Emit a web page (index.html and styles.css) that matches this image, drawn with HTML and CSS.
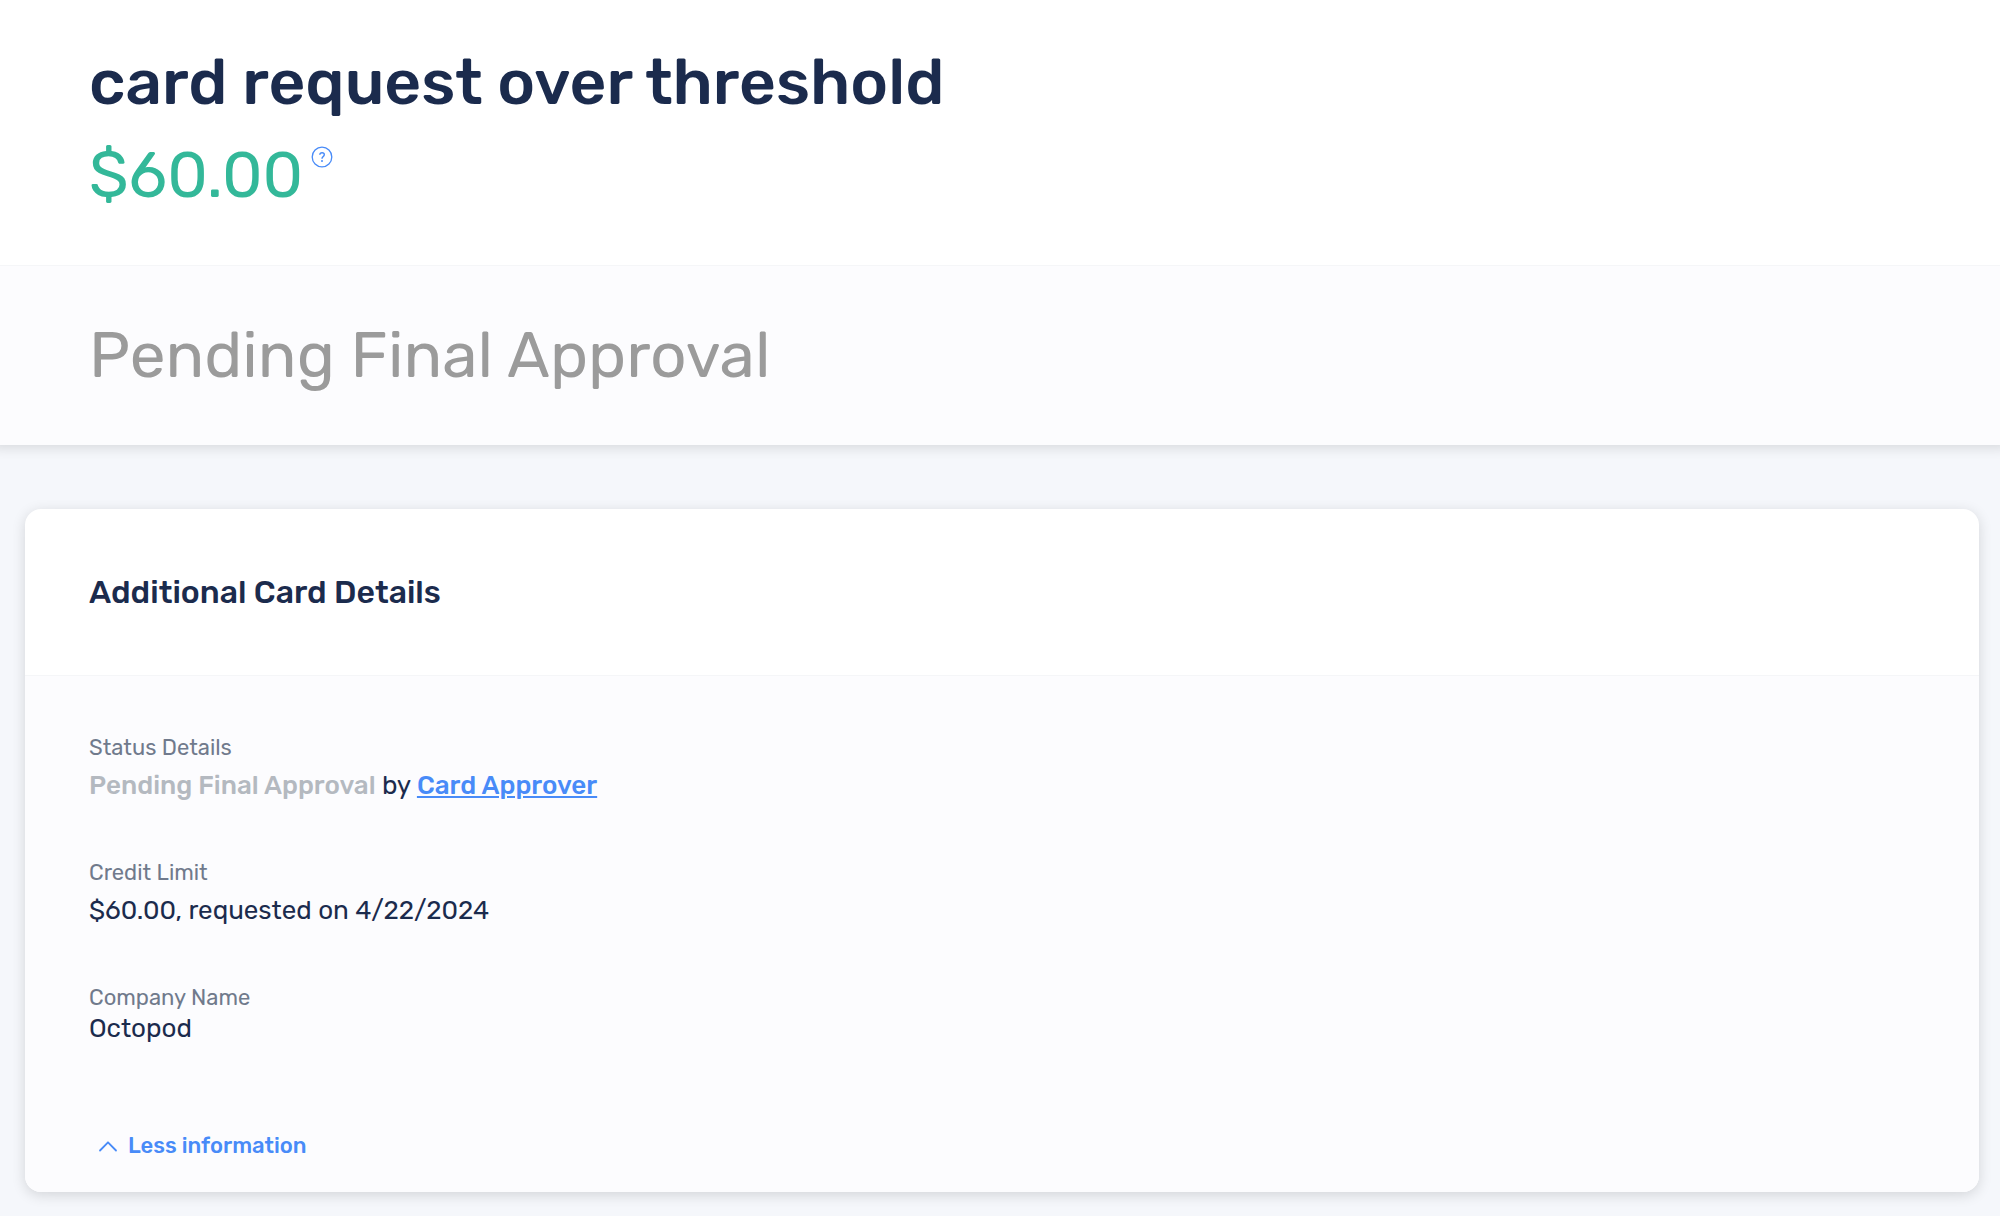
FILE: index.html
```html
<!DOCTYPE html>
<html lang="en">
<head>
<meta charset="utf-8">
<meta name="viewport" content="width=device-width, initial-scale=1">
<title>Card request over threshold</title>
<link rel="stylesheet" href="styles.css">
</head>
<body>
<header class="request">
  <div class="request-summary">
    <h1 class="request-title">card request over threshold</h1>
    <div class="request-amount">
      <span>$60.00</span>
      <button class="help" type="button" aria-label="About this amount">
        <svg class="help-ring" viewBox="0 0 22 22" aria-hidden="true"><circle cx="11" cy="11" r="9.8" fill="none" stroke="currentColor" stroke-width="1.3"/><path d="M8.8 8.7c.1-1.3 1-2 2.3-2 1.3 0 2.2.8 2.2 1.9 0 1-.5 1.5-1.2 2-.8.6-1.1 1-1.1 2.1" fill="none" stroke="currentColor" stroke-width="1.4"/><circle cx="11" cy="15" r="1" fill="currentColor"/></svg>
      </button>
    </div>
  </div>
  <p class="request-status">Pending Final Approval</p>
</header>
<main class="content">
  <section class="card">
    <h2 class="card-title">Additional Card Details</h2>
    <div class="card-body">
      <dl class="details">
        <div class="detail">
          <dt>Status Details</dt>
          <dd><span class="status">Pending Final Approval</span> by <a class="person" href="#approver">Card Approver</a></dd>
        </div>
        <div class="detail">
          <dt>Credit Limit</dt>
          <dd>$60.00, requested on 4/22/2024</dd>
        </div>
        <div class="detail detail-tight">
          <dt>Company Name</dt>
          <dd>Octopod</dd>
        </div>
      </dl>
      <button class="toggle" type="button" aria-expanded="true">
        <svg class="chevron" viewBox="0 0 20 14" aria-hidden="true"><path d="M2 11.5 10 3.3l8 8.200" fill="none" stroke="currentColor" stroke-width="1.8" stroke-linecap="round" stroke-linejoin="round"/></svg>
        <span>Less information</span>
      </button>
    </div>
  </section>
</main>
</body>
</html>
```
FILE: styles.css
```css
* {
  box-sizing: border-box;
}

body {
  margin: 0;
  background: #f5f7fb;
  color: #1b2b4d;
  font-family: Rubik, Inter, "Noto Sans", sans-serif;
  font-size: 26px;
  line-height: 31px;
}

h1, h2, p, dl, dd {
  margin: 0;
}

button {
  padding: 0;
  border: 0;
  background: none;
  color: #488bf8;
  font: inherit;
  cursor: pointer;
}

.request {
  background: #fff;
  box-shadow: 0 -5px 12px 8px rgba(0, 0, 0, 0.12);
}

.request-summary {
  display: flex;
  flex-direction: column;
  gap: 17px;
  padding: 44px 89px 52px;
  border-bottom: 1px solid #f5f6f8;
}

.request-title,
.request-amount,
.request-status {
  font-size: 64px;
  font-weight: 400;
  line-height: 76px;
}

.request-title {
  font-weight: 500;
}

.request-amount {
  display: flex;
  align-items: flex-start;
  gap: 8px;
  color: #33b899;
}

.help {
  display: flex;
  margin-top: 9px;
}

.help-ring {
  width: 22px;
  height: 22px;
}

.request-status {
  padding: 51px 89px 52px;
  background: #fcfcfe;
  color: #9b9b9b;
}

.content {
  padding: 64px 21px 24px 25px;
}

.card {
  overflow: hidden;
  border-radius: 16px;
  background: #fff;
  box-shadow: 0 3px 14px rgba(0, 0, 0, 0.14);
}

.card-title {
  padding: 64px;
  border-bottom: 1px solid #f5f6f8;
  font-size: 32px;
  font-weight: 500;
  line-height: 38px;
}

.card-body {
  padding: 58px 64px 33px;
  background: #fcfcfe;
}

.details {
  display: flex;
  flex-direction: column;
  gap: 58px;
}

.detail {
  display: flex;
  flex-direction: column;
  gap: 9px;
}

.detail-tight {
  gap: 2px;
}

.detail dt {
  color: #707a8c;
  font-size: 22px;
  line-height: 27px;
}

.status {
  color: #b4b9c0;
  font-weight: 500;
}

.person {
  color: #488bf8;
  font-weight: 500;
}

.toggle {
  display: flex;
  align-items: center;
  gap: 10px;
  margin: 88px 0 0 9px;
  font-size: 22px;
  font-weight: 500;
  line-height: 27px;
}

.chevron {
  width: 20px;
  height: 14px;
}
```
